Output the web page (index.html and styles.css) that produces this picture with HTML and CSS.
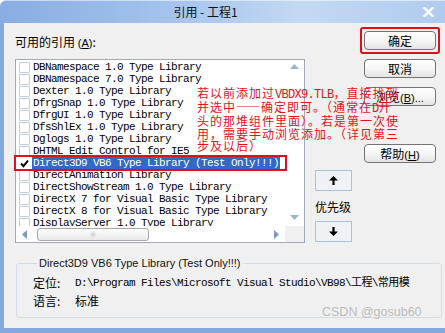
FILE: index.html
```html
<!DOCTYPE html>
<html lang="zh-CN">
<head>
    <meta charset="UTF-8">
    <meta name="viewport" content="width=device-width, initial-scale=1.0">
    <title>引用 - 工程1</title>
    <link rel="stylesheet" href="styles.css">
</head>
<body>
    <div class="window">
        <div class="titlebar">
            <span class="title">引用 - 工程1</span>
            <span class="close">
                <svg width="11" height="10" viewBox="0 0 11 10"><path d="M1.5 1 L9.5 9 M9.5 1 L1.5 9" stroke="#fff" stroke-width="2.4" stroke-linecap="square"/></svg>
            </span>
        </div>
        <div class="frame">
            <div class="top">
                <div class="left-col">
                    <div class="label">可用的引用 <span class="acc">(<u>A</u>)</span>:</div>
                    <div class="listbox">
                        <div class="list-main">
                            <div class="rows">
                                <div class="row"><span class="check"></span><span class="name">DBNamespace 1.0 Type Library</span></div>
                                <div class="row"><span class="check"></span><span class="name">DBNamespace 7.0 Type Library</span></div>
                                <div class="row"><span class="check"></span><span class="name">Dexter 1.0 Type Library</span></div>
                                <div class="row"><span class="check"></span><span class="name">DfrgSnap 1.0 Type Library</span></div>
                                <div class="row"><span class="check"></span><span class="name">DfrgUI 1.0 Type Library</span></div>
                                <div class="row"><span class="check"></span><span class="name">DfsShlEx 1.0 Type Library</span></div>
                                <div class="row"><span class="check"></span><span class="name">Dglogs 1.0 Type Library</span></div>
                                <div class="row"><span class="check"></span><span class="name">DHTML Edit Control for IE5</span></div>
                                <div class="row sel"><span class="check on"><svg width="9" height="9" viewBox="0 0 9 9"><path d="M1 4.5 L3.5 7.2 L8 1.5" fill="none" stroke="#000" stroke-width="2"/></svg></span><span class="name">Direct3D9 VB6 Type Library (Test Only!!!)</span></div>
                                <div class="row"><span class="check"></span><span class="name">DirectAnimation Library</span></div>
                                <div class="row"><span class="check"></span><span class="name">DirectShowStream 1.0 Type Library</span></div>
                                <div class="row"><span class="check"></span><span class="name">DirectX 7 for Visual Basic Type Library</span></div>
                                <div class="row"><span class="check"></span><span class="name">DirectX 8 for Visual Basic Type Library</span></div>
                                <div class="row"><span class="check"></span><span class="name">DisplayServer 1.0 Type Library</span></div>
                            </div>
                            <div class="vscroll">
                                <svg width="9" height="5" viewBox="0 0 9 5"><path d="M0 5 L4.5 0 L9 5 Z" fill="#9db3cf"/></svg>
                                <svg width="9" height="5" viewBox="0 0 9 5"><path d="M0 0 L4.5 5 L9 0 Z" fill="#9db3cf"/></svg>
                            </div>
                        </div>
                        <div class="hscroll">
                            <span class="harrow"><svg width="5" height="9" viewBox="0 0 5 9"><path d="M5 0 L0 4.5 L5 9 Z" fill="#7f98bb"/></svg></span>
                            <span class="thumb"></span>
                            <span class="htrack"></span>
                            <span class="harrow"><svg width="5" height="9" viewBox="0 0 5 9"><path d="M0 0 L5 4.5 L0 9 Z" fill="#7f98bb"/></svg></span>
                            <span class="corner"></span>
                        </div>
                    </div>
                </div>
                <div class="mid-col">
                    <button class="arrow-btn">
                        <svg width="9" height="9" viewBox="0 0 9 9"><path d="M4.5 0 L9 4.5 L5.6 4.5 L5.6 9 L3.4 9 L3.4 4.5 L0 4.5 Z" fill="#000"/></svg>
                    </button>
                    <div class="prio">优先级</div>
                    <button class="arrow-btn">
                        <svg width="9" height="9" viewBox="0 0 9 9"><path d="M4.5 9 L9 4.5 L5.6 4.5 L5.6 0 L3.4 0 L3.4 4.5 L0 4.5 Z" fill="#000"/></svg>
                    </button>
                </div>
                <div class="right-col">
                    <div class="ok-frame"><button class="btn">确定</button></div>
                    <button class="btn cancel">取消</button>
                    <button class="btn browse">浏览<span class="acc">(<u>B</u>)...</span></button>
                    <button class="btn help">帮助<span class="acc">(<u>H</u>)</span></button>
                </div>
            </div>

            <fieldset class="group">
                <legend>Direct3D9 VB6 Type Library (Test Only!!!)</legend>
                <div class="detail">
                    <span class="key">定位:</span>
                    <span class="val mono">D:\Program Files\Microsoft Visual Studio\VB98\工程\常用模</span>
                </div>
                <div class="detail">
                    <span class="key">语言:</span>
                    <span class="val">标准</span>
                </div>
            </fieldset>

            <!-- annotation drawn over the dialog -->
            <div class="note">若以前添加过<span class="lat">VBDX9.TLB</span>，直接找到<br>并选中——确定即可。（通常在<span class="lat">D</span>开<br>头的那堆组件里面）。若是第一次使<br>用，需要手动浏览添加。（详见第三<br>步及以后）</div>
            <div class="watermark">CSDN @gosub60</div>
        </div>
    </div>
</body>
</html>
```

FILE: styles.css
```css
body {
    margin: 0;
    background-color: #fff;
    font-family: "Noto Sans CJK SC", "Liberation Sans", sans-serif;
    font-size: 12px;
    color: #000;
}
.window {
    width: 445px;
    height: 333px;
    display: flex;
    flex-direction: column;
    overflow: hidden;
}
.titlebar {
    height: 23px;
    display: flex;
    align-items: center;
    border-radius: 6px 0 0 0;
    background: linear-gradient(90deg, #88ade2 0%, #a6c4ed 40%, #c3d9f3 68%, #b0cbee 100%);
    box-shadow: inset 0 1px 0 rgba(255, 255, 255, 0.5);
}
.title {
    flex: 1;
    text-align: center;
    line-height: 23px;
    color: #111;
}
.close {
    width: 34px;
    display: flex;
    justify-content: center;
    align-items: center;
}
.frame {
    position: relative;
    flex: 1;
    background-color: #f0f0f0;
    border-left: 4px solid #84a9de;
    border-bottom: 5px solid #84a9de;
}
.top {
    display: flex;
}
.left-col {
    margin-left: 11px;
}
.label {
    margin-top: 10px;
    line-height: 18px;
    height: 18px;
}
.acc {
    font-family: "Liberation Sans", sans-serif;
    font-size: 11px;
}
.listbox {
    margin-top: 8px;
    width: 290px;
    height: 184px;
    box-sizing: border-box;
    border: 1px solid #a3aab3;
    background-color: #fff;
    display: flex;
    flex-direction: column;
}
.list-main {
    display: flex;
    height: 166px;
}
.rows {
    width: 269px;
    padding-top: 1px;
    box-sizing: border-box;
    clip-path: inset(-5px -5px 0 -5px);
}
.row {
    height: 12px;
    display: flex;
    align-items: center;
    padding-left: 3px;
    white-space: nowrap;
    font-family: "Liberation Mono", monospace;
    font-size: 11px;
    letter-spacing: -0.6px;
}
.check {
    width: 11px;
    height: 11px;
    box-sizing: border-box;
    border: 1px solid #c4d0dc;
    background-color: #fff;
    flex-shrink: 0;
    display: flex;
    align-items: center;
    justify-content: center;
}
.check.on {
    border-color: transparent;
}
.name {
    margin-left: 2px;
    padding-left: 1px;
    line-height: 12px;
}
.row.sel {
    outline: 2px solid #e0101a;
}
.row.sel .name {
    background-color: #3169c6;
    color: #fff;
    padding-right: 1px;
}
.vscroll {
    width: 19px;
    display: flex;
    flex-direction: column;
    justify-content: space-between;
    align-items: center;
    padding: 4px 0 6px;
    box-sizing: border-box;
}
.hscroll {
    height: 16px;
    display: flex;
    align-items: center;
}
.harrow {
    width: 17px;
    height: 16px;
    display: flex;
    justify-content: center;
    align-items: center;
}
.thumb {
    width: 112px;
    height: 13px;
    margin-left: 4px;
    box-sizing: border-box;
    border: 1px solid #a9a9a9;
    border-radius: 3px;
    background:
        radial-gradient(circle at 50% 50%, #c8c8c8 0, #e4e4e4 2px, rgba(255, 255, 255, 0) 4px),
        linear-gradient(#ffffff, #f4f4f4 50%, #e8e8e8);
}
.htrack {
    flex: 1;
}
.corner {
    width: 19px;
    height: 16px;
    background-color: #f0f0f0;
}
.mid-col {
    margin-left: 10px;
    width: 37px;
    display: flex;
    flex-direction: column;
    align-items: flex-start;
}
.arrow-btn {
    width: 37px;
    height: 21px;
    padding: 0;
    border: 1px solid #aac2de;
    background-color: #eef2f7;
    display: flex;
    justify-content: center;
    align-items: center;
}
.arrow-btn:first-child {
    margin-top: 147px;
}
.prio {
    margin: 8px 0 6px;
    line-height: 16px;
}
.right-col {
    margin-left: 8px;
    width: 80px;
}
.ok-frame {
    margin-top: 4px;
    width: 80px;
    box-sizing: border-box;
    border: 2px solid #e0101a;
    border-radius: 3px;
    padding: 2px;
}
.btn {
    display: block;
    width: 72px;
    height: 19px;
    padding: 0;
    box-sizing: border-box;
    border: 1px solid #747474;
    border-radius: 4px;
    background: linear-gradient(#ffffff, #f5f5f5 55%, #e3e3e3);
    font-family: "Noto Sans CJK SC", sans-serif;
    font-size: 12px;
    line-height: 17px;
    color: #000;
}
.cancel {
    margin: 5px 0 0 4px;
}
.browse {
    margin: 9px 0 0 4px;
}
.help {
    margin: 38px 0 0 4px;
}
.group {
    margin: 13px 3px 0 12px;
    padding: 0 0 7px 16px;
    border: 1px solid #d5dde4;
    border-radius: 3px;
    min-width: 0;
}
.group legend {
    margin-left: 4px;
    padding: 0 2px;
    font-family: "Liberation Sans", sans-serif;
    font-size: 11px;
    line-height: 14px;
    color: #111;
}
.detail {
    display: flex;
    line-height: 18px;
    white-space: nowrap;
}
.detail:first-of-type {
    margin-top: 4px;
}
.key {
    width: 42px;
}
.mono {
    font-family: "Liberation Mono", "Noto Sans CJK SC", monospace;
    font-size: 11px;
    letter-spacing: -0.6px;
}
.note {
    position: absolute;
    left: 193px;
    top: 64px;
    white-space: nowrap;
    color: #e8101a;
    font-size: 12px;
    letter-spacing: 1px;
    line-height: 12.2px;
}
.note .lat {
    font-family: "Liberation Mono", monospace;
    font-size: 12px;
    letter-spacing: -0.7px;
}
.watermark {
    position: absolute;
    left: 318px;
    top: 282px;
    font-family: "Liberation Sans", sans-serif;
    font-size: 12.5px;
    color: #bcbcbc;
}
```
